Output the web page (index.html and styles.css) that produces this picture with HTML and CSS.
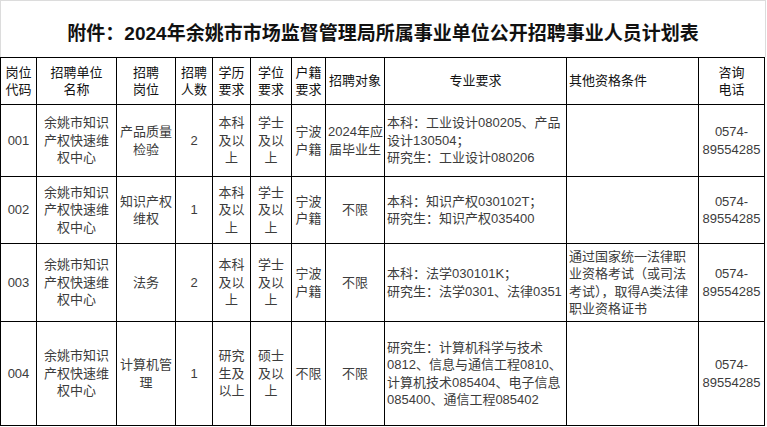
FILE: index.html
```html
<!DOCTYPE html>
<html lang="zh-CN">
<head>
<meta charset="utf-8">
<title>招聘计划表</title>
<link rel="stylesheet" href="styles.css">
</head>
<body>
<div class="page">
  <div class="title-box">
    <h1 class="title">附件：2024年余姚市市场监督管理局所属事业单位公开招聘事业人员计划表</h1>
  </div>
  <table class="plan">
    <colgroup>
      <col class="c1"><col class="c2"><col class="c3"><col class="c4"><col class="c5"><col class="c6"><col class="c7"><col class="c8"><col class="c9"><col class="c10"><col class="c11">
    </colgroup>
    <thead>
      <tr class="r-head">
        <th>岗位<br>代码</th>
        <th>招聘单位<br>名称</th>
        <th>招聘<br>岗位</th>
        <th>招聘<br>人数</th>
        <th>学历<br>要求</th>
        <th>学位<br>要求</th>
        <th>户籍<br>要求</th>
        <th>招聘对象</th>
        <th>专业要求</th>
        <th class="left">其他资格条件</th>
        <th>咨询<br>电话</th>
      </tr>
    </thead>
    <tbody>
      <tr class="r1">
        <td>001</td>
        <td>余姚市知识<br>产权快速维<br>权中心</td>
        <td>产品质量<br>检验</td>
        <td>2</td>
        <td>本科<br>及以<br>上</td>
        <td>学士<br>及以<br>上</td>
        <td>宁波<br>户籍</td>
        <td>2024年应<br>届毕业生</td>
        <td class="left">本科：工业设计080205、产品<br>设计130504；<br>研究生：工业设计080206</td>
        <td class="left"></td>
        <td>0574-<br>89554285</td>
      </tr>
      <tr class="r2">
        <td>002</td>
        <td>余姚市知识<br>产权快速维<br>权中心</td>
        <td>知识产权<br>维权</td>
        <td>1</td>
        <td>本科<br>及以<br>上</td>
        <td>学士<br>及以<br>上</td>
        <td>宁波<br>户籍</td>
        <td>不限</td>
        <td class="left">本科：知识产权030102T；<br>研究生：知识产权035400</td>
        <td class="left"></td>
        <td>0574-<br>89554285</td>
      </tr>
      <tr class="r3">
        <td>003</td>
        <td>余姚市知识<br>产权快速维<br>权中心</td>
        <td>法务</td>
        <td>2</td>
        <td>本科<br>及以<br>上</td>
        <td>学士<br>及以<br>上</td>
        <td>宁波<br>户籍</td>
        <td>不限</td>
        <td class="left">本科：法学030101K；<br>研究生：法学0301、法律0351</td>
        <td class="left">通过国家统一法律职<br>业资格考试（或司法<br>考试），取得A类法律<br>职业资格证书</td>
        <td>0574-<br>89554285</td>
      </tr>
      <tr class="r4">
        <td>004</td>
        <td>余姚市知识<br>产权快速维<br>权中心</td>
        <td><span class="ln">计算机管</span><span class="ln">理</span></td>
        <td>1</td>
        <td>研究<br>生及<br>以上</td>
        <td>硕士<br>及以<br>上</td>
        <td>不限</td>
        <td>不限</td>
        <td class="left">研究生：计算机科学与技术<br>0812、信息与通信工程0810、<br>计算机技术085404、电子信息<br>085400、通信工程085402</td>
        <td class="left"></td>
        <td>0574-<br>89554285</td>
      </tr>
    </tbody>
  </table>
</div>
</body>
</html>
```

FILE: styles.css
```css
html, body {
  margin: 0;
  padding: 0;
  background: #ffffff;
}

.page {
  width: 767px;
  font-family: "Liberation Sans", "Noto Sans CJK SC", sans-serif;
}

.title-box {
  width: 766px;
  height: 57px;
  box-sizing: border-box;
  border-top: 1px solid #dcdcdc;
  border-left: 1px solid #dcdcdc;
  border-right: 1px solid #dcdcdc;
  display: flex;
  align-items: center;
  justify-content: center;
  padding-top: 4px;
}

.title {
  margin: 0;
  font-size: 19px;
  font-weight: bold;
  color: #111111;
  white-space: nowrap;
}

.plan {
  width: 765px;
  border-collapse: collapse;
  table-layout: fixed;
  border: 1px solid #000;
}

.c1 { width: 36px; }
.c2 { width: 80px; }
.c3 { width: 59px; }
.c4 { width: 37px; }
.c5 { width: 38px; }
.c6 { width: 41px; }
.c7 { width: 34px; }
.c8 { width: 59px; }
.c9 { width: 182px; }
.c10 { width: 132px; }
.c11 { width: 66px; }

.plan th,
.plan td {
  border: 1px solid #000;
  padding: 0 2px;
  font-size: 13px;
  line-height: 17.5px;
  text-align: center;
  vertical-align: middle;
  white-space: nowrap;
  overflow: hidden;
}

.plan th {
  font-weight: normal;
  color: #111111;
}

.plan td {
  color: #3c3c3c;
}

.plan .left {
  text-align: left;
}

.ln {
  display: block;
}

.r-head { height: 47px; }
.r1 { height: 72px; }
.r2 { height: 67px; }
.r3 { height: 78px; }
.r4 { height: 104px; }
```
